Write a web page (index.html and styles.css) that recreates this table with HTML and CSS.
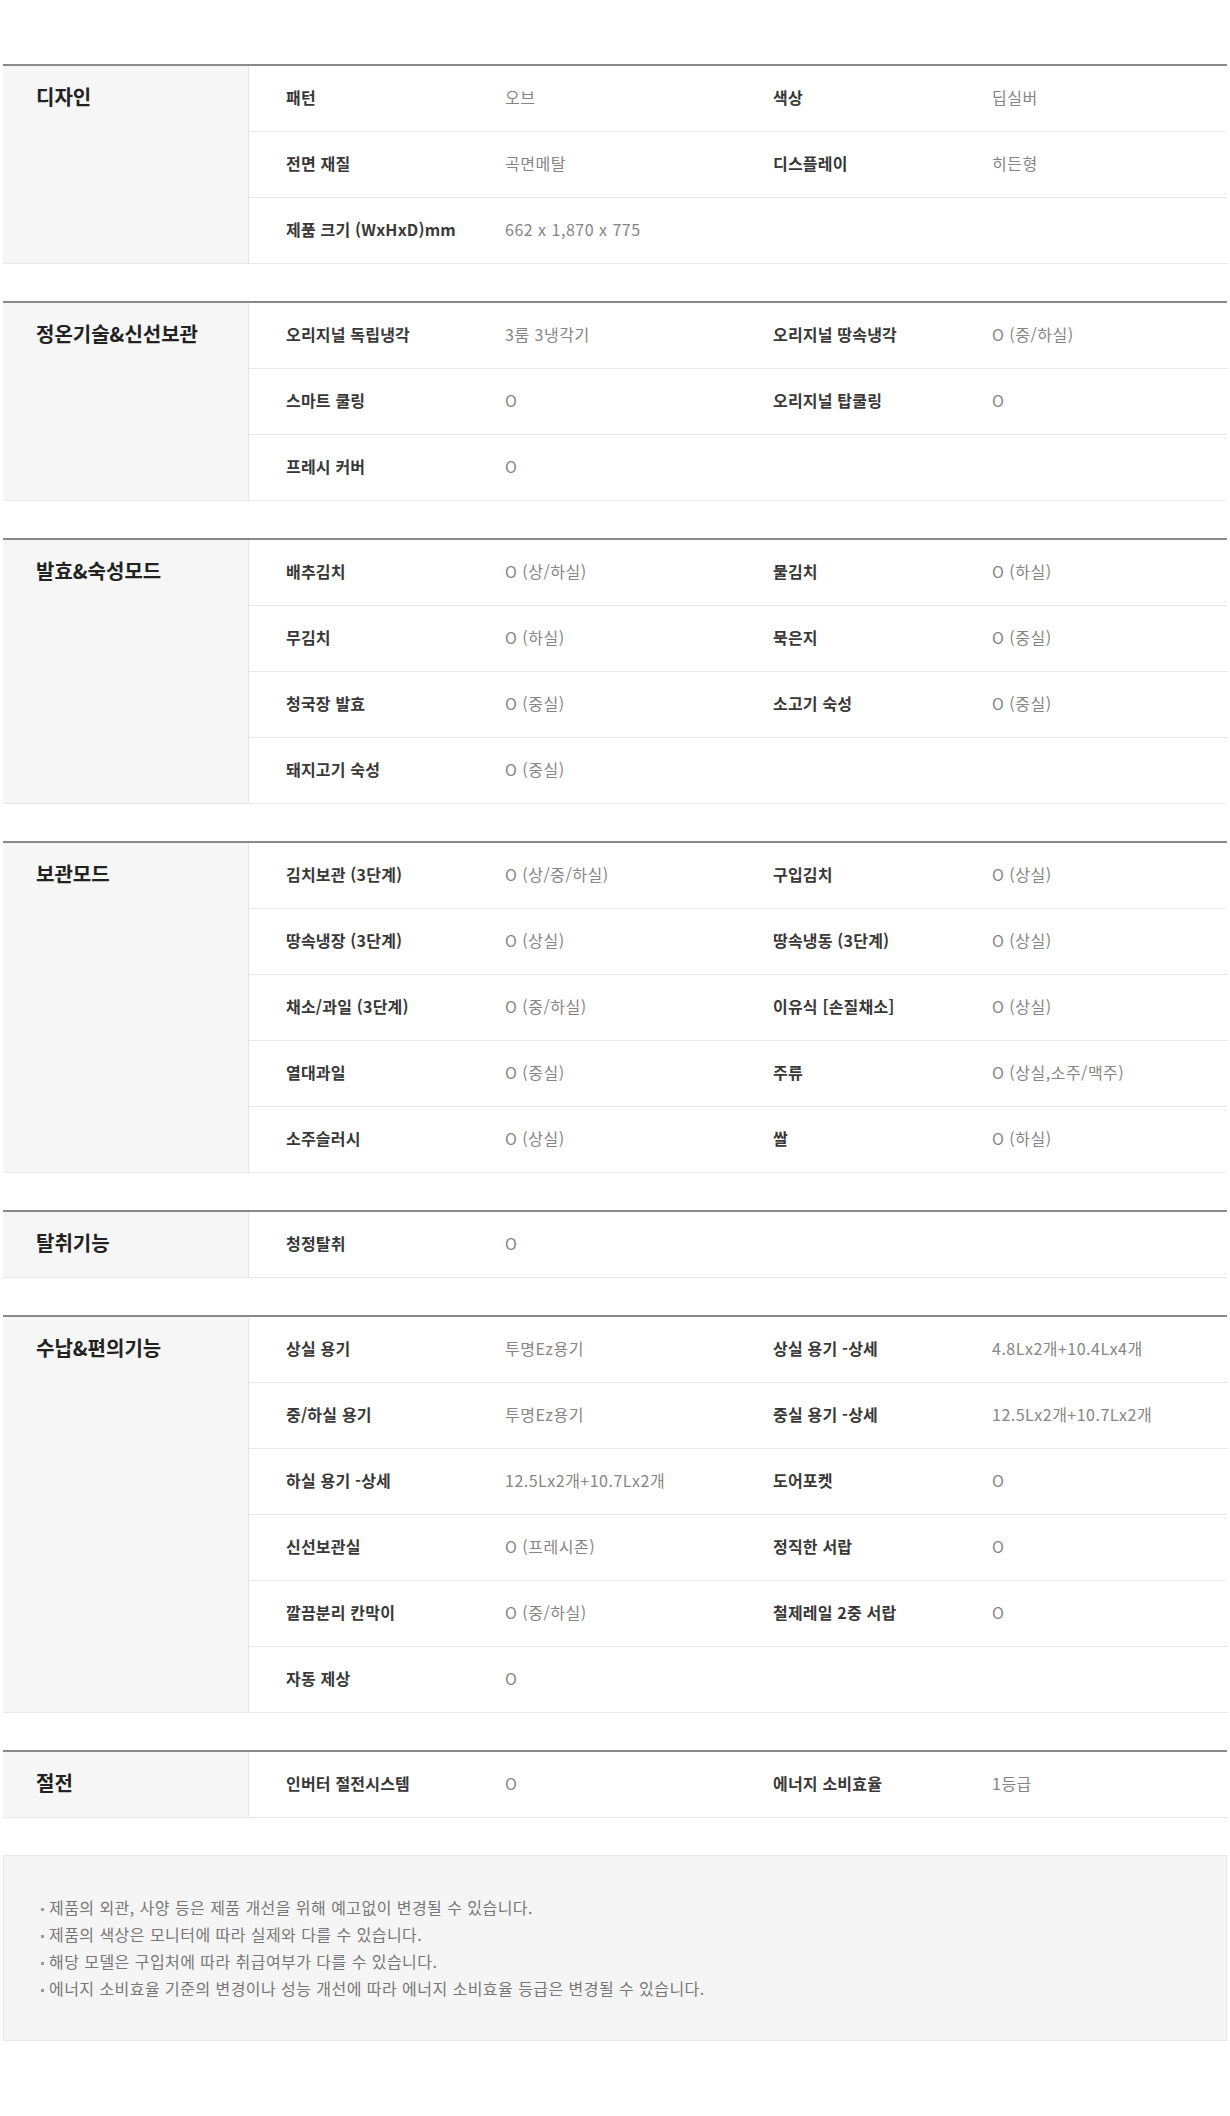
FILE: index.html
```html
<!DOCTYPE html>
<html lang="ko">
<head>
  <meta charset="UTF-8">
  <title>제품 사양</title>
  <link rel="stylesheet" href="styles.css">
</head>
<body>

  <div class="specs">

    <section class="spec">
      <h3 class="spec-title">디자인</h3>
      <div class="spec-rows">
        <div class="row"><span class="key">패턴</span><span class="val">오브</span><span class="key">색상</span><span class="val">딥실버</span></div>
        <div class="row"><span class="key">전면 재질</span><span class="val">곡면메탈</span><span class="key">디스플레이</span><span class="val">히든형</span></div>
        <div class="row"><span class="key">제품 크기 (WxHxD)mm</span><span class="val">662 x 1,870 x 775</span></div>
      </div>
    </section>

    <section class="spec">
      <h3 class="spec-title">정온기술&amp;신선보관</h3>
      <div class="spec-rows">
        <div class="row"><span class="key">오리지널 독립냉각</span><span class="val">3룸 3냉각기</span><span class="key">오리지널 땅속냉각</span><span class="val">O (중/하실)</span></div>
        <div class="row"><span class="key">스마트 쿨링</span><span class="val">O</span><span class="key">오리지널 탑쿨링</span><span class="val">O</span></div>
        <div class="row"><span class="key">프레시 커버</span><span class="val">O</span></div>
      </div>
    </section>

    <section class="spec">
      <h3 class="spec-title">발효&amp;숙성모드</h3>
      <div class="spec-rows">
        <div class="row"><span class="key">배추김치</span><span class="val">O (상/하실)</span><span class="key">물김치</span><span class="val">O (하실)</span></div>
        <div class="row"><span class="key">무김치</span><span class="val">O (하실)</span><span class="key">묵은지</span><span class="val">O (중실)</span></div>
        <div class="row"><span class="key">청국장 발효</span><span class="val">O (중실)</span><span class="key">소고기 숙성</span><span class="val">O (중실)</span></div>
        <div class="row"><span class="key">돼지고기 숙성</span><span class="val">O (중실)</span></div>
      </div>
    </section>

    <section class="spec">
      <h3 class="spec-title">보관모드</h3>
      <div class="spec-rows">
        <div class="row"><span class="key">김치보관 (3단계)</span><span class="val">O (상/중/하실)</span><span class="key">구입김치</span><span class="val">O (상실)</span></div>
        <div class="row"><span class="key">땅속냉장 (3단계)</span><span class="val">O (상실)</span><span class="key">땅속냉동 (3단계)</span><span class="val">O (상실)</span></div>
        <div class="row"><span class="key">채소/과일 (3단계)</span><span class="val">O (중/하실)</span><span class="key">이유식 [손질채소]</span><span class="val">O (상실)</span></div>
        <div class="row"><span class="key">열대과일</span><span class="val">O (중실)</span><span class="key">주류</span><span class="val">O (상실,소주/맥주)</span></div>
        <div class="row"><span class="key">소주슬러시</span><span class="val">O (상실)</span><span class="key">쌀</span><span class="val">O (하실)</span></div>
      </div>
    </section>

    <section class="spec">
      <h3 class="spec-title">탈취기능</h3>
      <div class="spec-rows">
        <div class="row"><span class="key">청정탈취</span><span class="val">O</span></div>
      </div>
    </section>

    <section class="spec">
      <h3 class="spec-title">수납&amp;편의기능</h3>
      <div class="spec-rows">
        <div class="row"><span class="key">상실 용기</span><span class="val">투명Ez용기</span><span class="key">상실 용기 -상세</span><span class="val">4.8Lx2개+10.4Lx4개</span></div>
        <div class="row"><span class="key">중/하실 용기</span><span class="val">투명Ez용기</span><span class="key">중실 용기 -상세</span><span class="val">12.5Lx2개+10.7Lx2개</span></div>
        <div class="row"><span class="key">하실 용기 -상세</span><span class="val">12.5Lx2개+10.7Lx2개</span><span class="key">도어포켓</span><span class="val">O</span></div>
        <div class="row"><span class="key">신선보관실</span><span class="val">O (프레시존)</span><span class="key">정직한 서랍</span><span class="val">O</span></div>
        <div class="row"><span class="key">깔끔분리 칸막이</span><span class="val">O (중/하실)</span><span class="key">철제레일 2중 서랍</span><span class="val">O</span></div>
        <div class="row"><span class="key">자동 제상</span><span class="val">O</span></div>
      </div>
    </section>

    <section class="spec">
      <h3 class="spec-title">절전</h3>
      <div class="spec-rows">
        <div class="row"><span class="key">인버터 절전시스템</span><span class="val">O</span><span class="key">에너지 소비효율</span><span class="val">1등급</span></div>
      </div>
    </section>

  </div>

  <ul class="notes">
    <li>제품의 외관, 사양 등은 제품 개선을 위해 예고없이 변경될 수 있습니다.</li>
    <li>제품의 색상은 모니터에 따라 실제와 다를 수 있습니다.</li>
    <li>해당 모델은 구입처에 따라 취급여부가 다를 수 있습니다.</li>
    <li>에너지 소비효율 기준의 변경이나 성능 개선에 따라 에너지 소비효율 등급은 변경될 수 있습니다.</li>
  </ul>

</body>
</html>
```

FILE: styles.css
```css
* {
  box-sizing: border-box;
}

body {
  font-family: "Noto Sans CJK KR", "Noto Sans", sans-serif;
  background-color: #ffffff;
  color: #333333;
  margin: 0;
  padding: 64px 3px 0;
}

.spec {
  display: grid;
  grid-template-columns: 246px 1fr;
  border-top: 2px solid #8a8a8a;
  margin-bottom: 37px;
}

.spec-title {
  margin: 0;
  padding: 18px 0 0 33px;
  font-size: 20px;
  line-height: 26px;
  font-weight: 700;
  color: #222222;
  background-color: #f6f6f6;
  border-right: 1px solid #e4e4e4;
  border-bottom: 1px solid #e8e8e8;
}

.row {
  display: grid;
  grid-template-columns: 219px 268px 219px 1fr;
  align-items: center;
  height: 66px;
  padding: 0 0 3px 37px;
  border-bottom: 1px solid #e8e8e8;
  font-size: 16px;
}

.key {
  font-weight: 700;
  color: #383838;
  letter-spacing: 0.2px;
}

.val {
  color: #858585;
  letter-spacing: 0.5px;
}

.notes {
  list-style: none;
  margin: 0;
  padding: 38px 37px;
  background-color: #f5f5f5;
  border: 1px solid #e6e6e6;
  font-size: 16px;
  line-height: 27px;
  letter-spacing: 0.45px;
  color: #777777;
}

.notes li::before {
  content: "";
  display: inline-block;
  width: 3px;
  height: 3px;
  margin-right: 5px;
  vertical-align: middle;
  background-color: #999999;
}
```
